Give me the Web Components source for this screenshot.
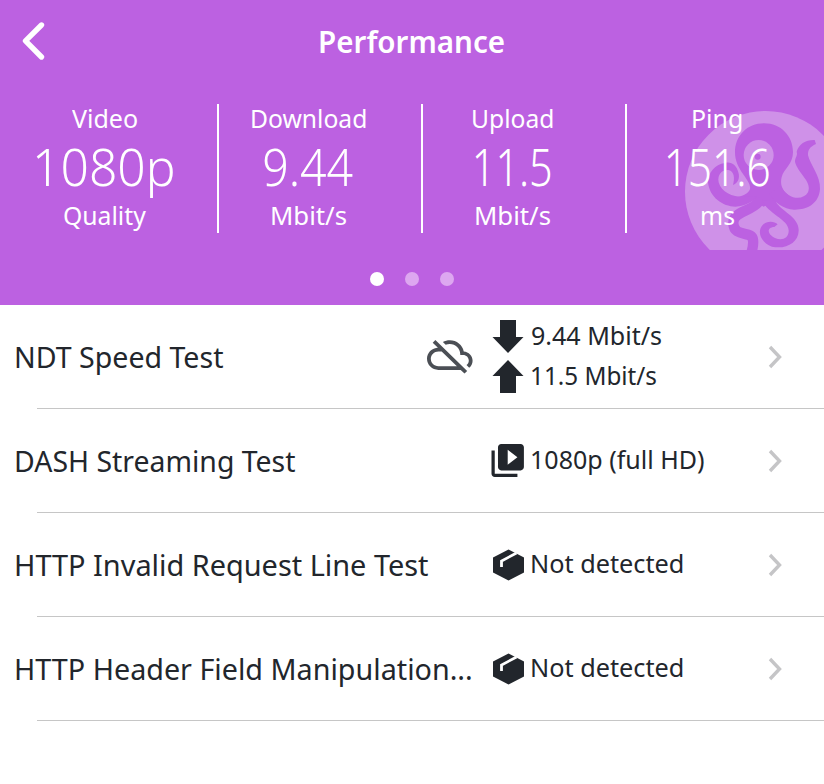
<!DOCTYPE html>
<html lang="en"><head><meta charset="utf-8"><title>Performance</title>
<style>
html,body{margin:0;background:#fff}
body{font-family:"Noto Sans","Open Sans",sans-serif;color:#22262c}
</style></head><body>
<performance-screen></performance-screen>
<script>
const define=(name,html,setup)=>{
  const t=document.createElement('template');t.innerHTML=html;
  customElements.define(name,class extends HTMLElement{
    constructor(){super();this.attachShadow({mode:'open'}).append(t.content.cloneNode(true))}
    connectedCallback(){if(setup)setup(this,this.shadowRoot)}
  });
};
// Single-line label whose glyphs span exactly the width given in "w".
define('fit-text',`<style>:host{display:block;white-space:nowrap;flex:none}span{display:inline-block;transform-origin:0 50%}</style><span></span>`,(el,r)=>{
  const s=r.querySelector('span'),w=+el.getAttribute('w');
  s.textContent=el.getAttribute('text');el.style.width=w+'px';
  const cs=getComputedStyle(el),c=document.createElement('canvas').getContext('2d');
  c.font=`${cs.fontWeight} ${cs.fontSize} ${cs.fontFamily}`;
  const m=c.measureText(s.textContent),ink=m.actualBoundingBoxLeft+m.actualBoundingBoxRight;
  s.style.transform=`scaleX(${w/ink}) translateX(${m.actualBoundingBoxLeft}px)`;
});
const icons={
  back:[24,40,'<path d="M20.5 4 4.500 19.800 20.500 36" fill="none" stroke="#fff" stroke-width="5.4" stroke-linecap="round" stroke-linejoin="round"/>'],
  next:[14,24,'<path d="M2 2 11.500 12 2 22" fill="none" stroke="#c5c5c7" stroke-width="3.4"/>'],
  cloud:[46,46,'<path transform="scale(1.9 1.85) translate(0 -.6)" fill="#4b4f55" d="M24 15c0-2.64-2.05-4.78-4.65-4.96C18.67 6.590 15.640 4 12 4c-1.330 0-2.570.36-3.650.97l1.490 1.490C10.510 6.170 11.230 6 12 6c3.040 0 5.500 2.460 5.500 5.500v.5H19c1.660 0 3 1.340 3 3 0 .99-.48 1.850-1.210 2.400l1.410 1.410c1.090-.92 1.800-2.270 1.800-3.810zM4.410 3.860L3 5.270l2.770 2.770h-.42C2.340 8.360 0 10.910 0 14c0 3.310 2.690 6 6 6h11.730l2 2 1.410-1.410L4.410 3.860zM6 18c-2.210 0-4-1.790-4-4s1.790-4 4-4h1.730l8 8H6z"/>'],
  down:[32,34,'<path d="M8 0h16v17h7.500L16 33 .5 17H8z"/>'],
  up:[32,34,'<path d="M16 0l15.500 16H24v17H8V16H.5z"/>'],
  video:[33,34,'<path transform="translate(-.5 0) scale(1.62 1.65) translate(-2 -2)" d="M4 6H2v14c0 1.100.9 2 2 2h14v-2H4V6zm16-4H8c-1.100 0-2 .9-2 2v12c0 1.100.9 2 2 2h12c1.100 0 2-.9 2-2V4c0-1.100-.9-2-2-2zm-8 12.500v-9l6 4.500-6 4.500z"/>'],
  box:[32,32,'<path d="M16.500.5 32 8.500v15L16.500 31.500 1 23.500v-15z"/><path d="M24.500 4 9.500 12v6" fill="none" stroke="#fff" stroke-width="2.800"/>']
};
define('ui-icon',`<style>:host{display:block;flex:none}svg{display:block;overflow:visible;fill:#22262c}</style><div></div>`,(el,r)=>{
  const [w,h,p]=icons[el.getAttribute('name')];
  r.querySelector('div').innerHTML=`<svg width="${w}" height="${h}" viewBox="0 0 ${w} ${h}">${p}</svg>`;
});
define('octopus-mark',`<style>:host{display:block;width:160px;height:155px;overflow:hidden}svg{display:block}</style>
<svg width="160" height="155" viewBox="0 0 480 465"><circle cx="305" cy="290" r="242" fill="#cf91e8"/>
<g fill="none" stroke="#bc61e1" stroke-linecap="round" stroke-linejoin="round">
<path fill="#bc61e1" stroke="none" d="M300 85C351 85 387 123 387 172C387 207 361 220 353 246C346 274 360 292 380 305L350 322L330 322L298 335L270 312L210 332L200 308C225 306 247 302 257 285C268 259 213 229 213 172C213 123 249 85 300 85Z"/>
<circle cx="284" cy="180" r="45" fill="#cf91e8" stroke="none"/><circle cx="281" cy="185" r="9" fill="#bc61e1" stroke="none"/>
<path fill="#bc61e1" stroke="none" d="M265 303C225 313 174 300 164 262C159 236 178 222 196 226C210 231 213 249 207 270C220 266 229 251 223 232C217 210 202 199 183 204C152 208 132 234 132 262C136 307 177 335 214 335C246 333 265 320 280 306Z"/>
<path fill="#bc61e1" stroke="none" d="M350 272C371 315 417 318 432 292C445 262 407 239 395 207C388 190 403 184 398 170C405 147 425 134 452 135L456 147C438 155 431 165 432 181C438 208 470 244 468 282C465 326 429 345 390 344C359 342 333 324 316 296Z"/>
<path d="M283 322C260 350 206 350 208 385C210 430 265 405 267 435Q269 450 263 470" stroke-width="31"/>
<path fill="#bc61e1" stroke="none" d="M294 315C310 356 374 373 374 406C375 433 351 437 333 429C312 420 305 397 331 396L341 388C330 376 304 378 294 392C279 412 291 443 324 455C365 464 403 443 404 407C406 365 350 349 334 318Z"/>
</g></svg>`);
define('stat-pager',`<style>:host{display:flex;justify-content:center;gap:21px}i{width:14px;height:14px;border-radius:50%;background:#dda7f0}i:first-of-type{background:#fff}</style><i></i><i></i><i></i>`);
const fit=(c,t,w)=>`<fit-text class="${c}" text="${t}" w="${w}"></fit-text>`;
customElements.define('stat-item',class extends HTMLElement{
  connectedCallback(){
    const d=this.dataset,r=this.attachShadow({mode:'open'});
    r.innerHTML=`<style>:host{display:flex;flex-direction:column;align-items:center;height:129px;box-sizing:border-box;padding-right:23px;border-right:2px solid #fff;color:#fff}
:host([last]){border:0;padding-right:16px}
.s{font-size:25px;line-height:28px;height:28px}.b{font-size:51px;font-weight:300;line-height:54px;height:54px;padding:7px 0 8px}</style>`
    +fit('s',d.label,d.lw)+fit('b',d.value,d.vw)+fit('s',d.unit,d.uw);
  }
});
define('performance-header',`<style>:host{display:block;position:relative;height:305px;background:#bc61e1;color:#fff}
.bar{display:grid;grid-template-columns:1fr auto 1fr;align-items:center;height:82px}
.bar ui-icon{margin-left:21px}
.title{font-size:31px;font-weight:600;line-height:40px}
octopus-mark{position:absolute;left:664px;top:95px}
.stats{position:relative;display:grid;grid-template-columns:204px 204px 204px 1fr;padding:22px 0 0 15px}
stat-pager{padding-top:39px}</style>
<octopus-mark></octopus-mark>
<div class="bar"><ui-icon name="back"></ui-icon><fit-text class="title" text="Performance" w="184"></fit-text></div>
<div class="stats">
<stat-item data-label="Video" data-lw="65" data-value="1080p" data-vw="137" data-unit="Quality" data-uw="82"></stat-item>
<stat-item data-label="Download" data-lw="114" data-value="9.44" data-vw="89" data-unit="Mbit/s" data-uw="74"></stat-item>
<stat-item data-label="Upload" data-lw="80" data-value="11.5" data-vw="76" data-unit="Mbit/s" data-uw="74"></stat-item>
<stat-item last data-label="Ping" data-lw="49" data-value="151.6" data-vw="102" data-unit="ms" data-uw="32"></stat-item>
</div><stat-pager></stat-pager>`);
define('test-row',`<style>:host{display:grid;grid-template-columns:413px 65px 1fr 56px;height:104px;align-items:center;padding-left:14px;background:linear-gradient(#c6c6c6,#c6c6c6) 37px 103px/100% 1px no-repeat;box-sizing:border-box}
.name{font-size:29px;line-height:40px;padding:0 0 1px 1.500px}
.res{display:flex;flex-direction:column;gap:6px}</style>
<fit-text class="name"></fit-text><slot name="flag"><span></span></slot><div class="res"><slot></slot></div><ui-icon name="next"></ui-icon>`,(el,r)=>{
  const n=document.createElement('fit-text');n.className='name';n.setAttribute('text',el.dataset.name);n.setAttribute('w',el.dataset.w);
  r.querySelector('.name').replaceWith(n);
});
define('test-result',`<style>:host{display:flex;align-items:center;gap:8px;height:34px;font-size:25px;line-height:34px}
.pic{display:flex;justify-content:center;width:32px}.txt{margin-top:-4px;padding-left:.3px}</style><div class="pic"></div><div class="txt"></div>`,(el,r)=>{
  const d=el.dataset;r.querySelector('.pic').innerHTML=`<ui-icon name="${d.icon}"></ui-icon>`;
  r.querySelector('.txt').innerHTML=fit('',d.text,d.w);
});
define('performance-screen',`<style>:host{display:block;width:824px;height:784px;overflow:hidden;background:#fff}</style>
<performance-header></performance-header>
<test-row data-name="NDT Speed Test" data-w="207"><ui-icon slot="flag" name="cloud"></ui-icon>
<test-result data-icon="down" data-text="9.44 Mbit/s" data-w="129"></test-result><test-result data-icon="up" data-text="11.5 Mbit/s" data-w="124"></test-result></test-row>
<test-row data-name="DASH Streaming Test" data-w="279"><test-result data-icon="video" data-text="1080p (full HD)" data-w="172"></test-result></test-row>
<test-row data-name="HTTP Invalid Request Line Test" data-w="412"><test-result data-icon="box" data-text="Not detected" data-w="151"></test-result></test-row>
<test-row data-name="HTTP Header Field Manipulation..." data-w="455"><test-result data-icon="box" data-text="Not detected" data-w="151"></test-result></test-row>`);
</script></body></html>
